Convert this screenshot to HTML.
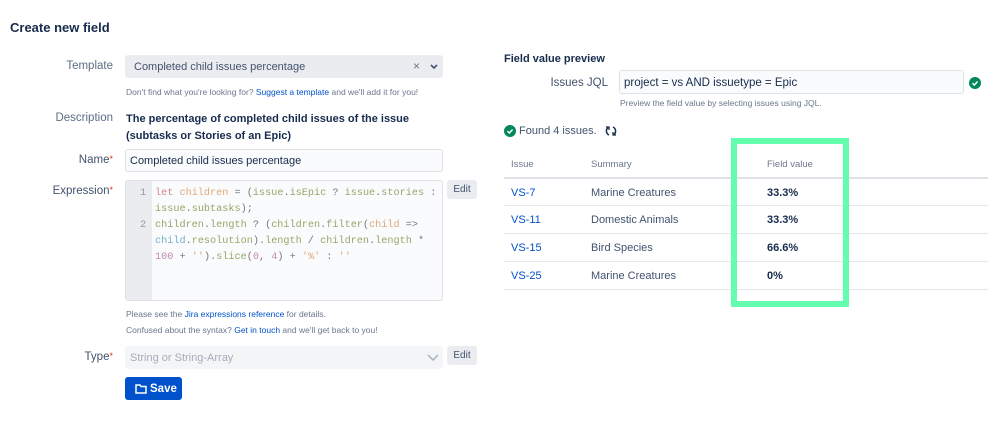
<!DOCTYPE html>
<html><head><meta charset="utf-8"><style>
*{box-sizing:border-box;margin:0;padding:0}
body{width:999px;height:429px;background:#fff;font-family:"Liberation Sans",sans-serif;color:#172b4d;position:relative;overflow:hidden}
.a{position:absolute;white-space:nowrap}
.lbl{font-size:11.5px;color:#5e6c84;text-align:right;width:110px;left:3px}
.req{color:#de350b;font-size:9px;vertical-align:top}
.help{font-size:8.5px;color:#6b778c}
.lnk{color:#0052cc}
.box{position:absolute;border:1px solid #dfe1e6;border-radius:3px}
.mono{font-family:"Liberation Mono",monospace;font-size:10.2px}
.btn{position:absolute;background:#ebecf0;border-radius:3px;font-size:10px;color:#42526e;text-align:center;line-height:19px}
.row{position:absolute;left:504px;width:484px;height:1px;background:#e5e7eb}
.td{font-size:11px}
</style></head><body>
<div class="a" style="left:10px;top:20px;font-size:13px;font-weight:bold">Create new field</div>

<div class="a lbl" style="top:60px">Template</div>
<div class="box" style="left:125px;top:55px;width:318px;height:23px;background:#ebecf0;border-color:#ebecf0"></div>
<div class="a" style="left:134px;top:61px;font-size:11px;color:#42526e">Completed child issues percentage</div>
<div class="a" style="left:413px;top:59px;font-size:12px;color:#6b778c">×</div>
<svg class="a" style="left:430px;top:64px" width="8" height="6"><path d="M1 1l3 3 3-3" stroke="#42526e" stroke-width="1.6" fill="none"/></svg>
<div class="a help" style="left:126px;top:87px">Don't find what you're looking for? <span class="lnk">Suggest a template</span> and we'll add it for you!</div>

<div class="a lbl" style="top:112px">Description</div>
<div class="a" style="left:126px;top:111px;font-size:11px;font-weight:bold;line-height:17px">The percentage of completed child issues of the issue<br>(subtasks or Stories of an Epic)</div>

<div class="a lbl" style="top:154px;color:#42526e">Name<span class="req">*</span></div>
<div class="box" style="left:125px;top:149px;width:318px;height:23px;background:#fafbfc"></div>
<div class="a" style="left:130px;top:155px;font-size:11px">Completed child issues percentage</div>

<div class="a lbl" style="top:185px;color:#42526e">Expression<span class="req">*</span></div>
<div class="box" style="left:125px;top:180px;width:318px;height:121px;background:#fafbfc"></div>
<div class="a" style="left:126px;top:181px;width:26px;height:119px;background:#ebecf0"></div>
<div class="a mono" style="left:140px;top:186px;color:#999;line-height:16px">1<br><br>2</div>
<div class="a mono" style="left:155px;top:186px;line-height:16px;color:#98a66a">
<span style="color:#d48a8a">let</span> <span style="color:#e0a87a">children</span> <span style="color:#777">= (</span>issue<span style="color:#777">.</span>isEpic <span style="color:#777">?</span> issue<span style="color:#777">.</span>stories <span style="color:#777">:</span><br>issue<span style="color:#777">.</span>subtasks<span style="color:#777">);</span><br>children<span style="color:#777">.</span>length <span style="color:#777">? (</span>children<span style="color:#777">.</span>filter<span style="color:#777">(</span><span style="color:#e0a87a">child</span> <span style="color:#777">=></span><br><span style="color:#7ab0c8">child</span><span style="color:#777">.</span>resolution<span style="color:#777">).</span>length <span style="color:#777">/</span> children<span style="color:#777">.</span>length <span style="color:#777">*</span><br><span style="color:#c08ab0">100</span> <span style="color:#777">+</span> <span style="color:#e0a87a">''</span><span style="color:#777">).</span>slice<span style="color:#777">(</span><span style="color:#c08ab0">0</span><span style="color:#777">,</span> <span style="color:#c08ab0">4</span><span style="color:#777">) +</span> <span style="color:#e0a87a">'%'</span> <span style="color:#777">:</span> <span style="color:#e0a87a">''</span></div>
<div class="btn" style="left:447px;top:180px;width:30px">Edit</div>
<div class="a help" style="left:126px;top:309px">Please see the <span class="lnk">Jira expressions reference</span> for details.</div>
<div class="a help" style="left:126px;top:325px">Confused about the syntax? <span class="lnk">Get in touch</span> and we'll get back to you!</div>

<div class="a lbl" style="top:351px;color:#42526e">Type<span class="req">*</span></div>
<div class="box" style="left:125px;top:346px;width:318px;height:23px;background:#f4f5f7;border-color:#f4f5f7"></div>
<div class="a" style="left:130px;top:352px;font-size:11px;color:#a5adba">String or String-Array</div>
<svg class="a" style="left:427px;top:354px" width="12" height="8"><path d="M1 1l5 5 5-5" stroke="#a5adba" stroke-width="1.4" fill="none"/></svg>
<div class="btn" style="left:447px;top:346px;width:30px">Edit</div>
<div class="a" style="left:125px;top:377px;width:57px;height:23px;background:#0052cc;border-radius:3px"></div>
<svg class="a" style="left:135px;top:383px" width="12" height="11"><path d="M1 2h4l1 1.5h5v6.5h-10z" stroke="#fff" stroke-width="1.5" fill="none"/></svg>
<div class="a" style="left:150px;top:383px;font-size:11.5px;font-weight:bold;color:#fff">Save</div>

<div class="a" style="left:504px;top:53px;font-size:11px;font-weight:bold">Field value preview</div>
<div class="a" style="left:500px;top:77px;width:108px;text-align:right;font-size:11.5px;color:#42526e">Issues JQL</div>
<div class="box" style="left:619px;top:70px;width:345px;height:24px;background:#fafbfc"></div>
<div class="a" style="left:624px;top:77px;font-size:11.5px">project = vs AND issuetype = Epic</div>
<svg class="a" style="left:969px;top:77px" width="12" height="12"><circle cx="6" cy="6" r="6" fill="#00875a"/><path d="M3.5 6.2l1.8 1.8 3.3-3.5" stroke="#fff" stroke-width="1.5" fill="none"/></svg>
<div class="a help" style="left:620px;top:98px">Preview the field value by selecting issues using JQL.</div>

<svg class="a" style="left:504px;top:125px" width="12" height="12"><circle cx="6" cy="6" r="6" fill="#00875a"/><path d="M3.5 6.2l1.8 1.8 3.3-3.5" stroke="#fff" stroke-width="1.5" fill="none"/></svg>
<div class="a" style="left:519px;top:125px;font-size:11px;color:#42526e">Found 4 issues.</div>
<svg class="a" style="left:605px;top:125px" width="12" height="12"><path d="M3 2.5A4.5 4.5 0 0 0 4 10M9 9.5A4.5 4.5 0 0 0 8 2" stroke="#172b4d" stroke-width="1.5" fill="none"/><path d="M1 2h3v3M11 10h-3v-3" stroke="#172b4d" stroke-width="1.3" fill="none"/></svg>

<div class="a" style="left:511px;top:159px;font-size:9.5px;color:#6b778c">Issue</div>
<div class="a" style="left:591px;top:159px;font-size:9.5px;color:#6b778c">Summary</div>
<div class="a" style="left:767px;top:159px;font-size:9.5px;color:#6b778c">Field value</div>
<div class="row" style="top:177px;height:2px;background:#dfe1e6"></div>
<div class="a td lnk" style="left:511px;top:187px">VS-7</div><div class="a td" style="left:591px;top:187px;color:#42526e">Marine Creatures</div><div class="a td" style="left:767px;top:187px;font-weight:bold">33.3%</div>
<div class="row" style="top:205px"></div>
<div class="a td lnk" style="left:511px;top:214px">VS-11</div><div class="a td" style="left:591px;top:214px;color:#42526e">Domestic Animals</div><div class="a td" style="left:767px;top:214px;font-weight:bold">33.3%</div>
<div class="row" style="top:233px"></div>
<div class="a td lnk" style="left:511px;top:242px">VS-15</div><div class="a td" style="left:591px;top:242px;color:#42526e">Bird Species</div><div class="a td" style="left:767px;top:242px;font-weight:bold">66.6%</div>
<div class="row" style="top:261px"></div>
<div class="a td lnk" style="left:511px;top:270px">VS-25</div><div class="a td" style="left:591px;top:270px;color:#42526e">Marine Creatures</div><div class="a td" style="left:767px;top:270px;font-weight:bold">0%</div>
<div class="row" style="top:289px"></div>

<div class="a" style="left:731px;top:138px;width:118px;height:169px;border:6px solid #64fdb0"></div>
</body></html>
